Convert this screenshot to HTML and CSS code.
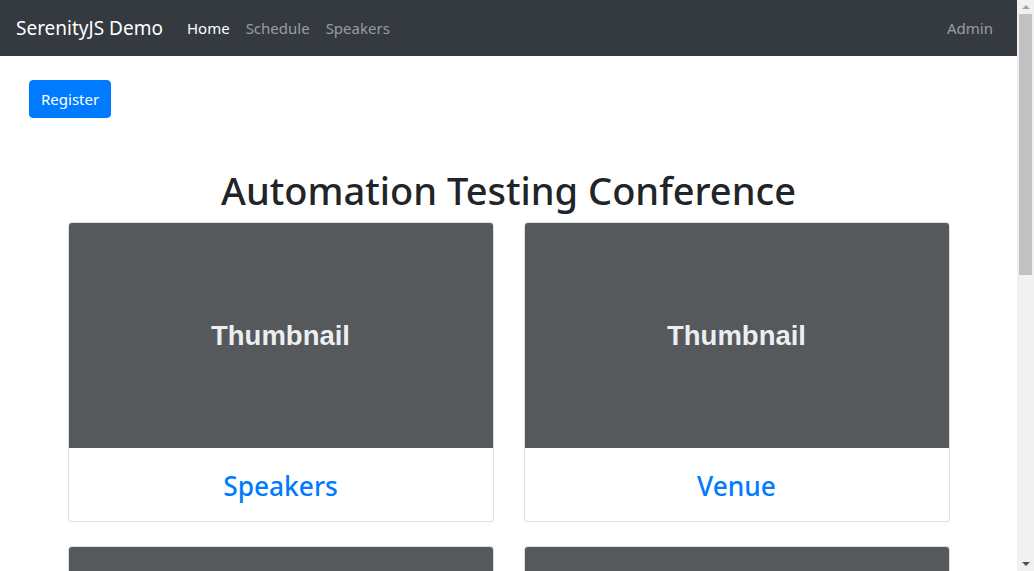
FILE: index.html
```html
<!DOCTYPE html>
<html lang="en">
<head>
<meta charset="utf-8">
<title>SerenityJS Demo</title>
<link rel="stylesheet" href="styles.css">
</head>
<body>
<div class="page">
  <nav class="navbar">
    <a class="brand" href="#">SerenityJS Demo</a>
    <ul class="nav">
      <li><a class="nav-link active" href="#">Home</a></li>
      <li><a class="nav-link" href="#">Schedule</a></li>
      <li><a class="nav-link" href="#">Speakers</a></li>
    </ul>
    <ul class="nav nav-right">
      <li><a class="nav-link" href="#">Admin</a></li>
    </ul>
  </nav>
  <main class="content">
    <div class="actions">
      <button class="btn" type="button">Register</button>
    </div>
    <h1 class="title">Automation Testing Conference</h1>
    <div class="cards">
      <div class="card">
        <div class="thumb"><span>Thumbnail</span></div>
        <div class="card-body"><a class="card-title" href="#">Speakers</a></div>
      </div>
      <div class="card">
        <div class="thumb"><span>Thumbnail</span></div>
        <div class="card-body"><a class="card-title" href="#">Venue</a></div>
      </div>
      <div class="card">
        <div class="thumb"></div>
      </div>
      <div class="card">
        <div class="thumb"></div>
      </div>
    </div>
  </main>
</div>
<div class="scrollbar">
  <div class="sb-arrow sb-up"></div>
  <div class="sb-track"><div class="sb-thumb"></div></div>
  <div class="sb-arrow sb-down"></div>
</div>
</body>
</html>
```
FILE: styles.css
```css
html, body {
  margin: 0;
  padding: 0;
  height: 100%;
  overflow: hidden;
}
body {
  display: flex;
  font-family: "Noto Sans", "Open Sans", sans-serif;
  font-size: 15px;
  line-height: 24px;
  color: #212529;
  background: #fff;
}
.page {
  flex: 1;
  min-width: 0;
  height: 100%;
  overflow: hidden;
}
.navbar {
  height: 56px;
  background: #343a40;
  display: flex;
  align-items: center;
  padding: 0 16px;
  box-sizing: border-box;
}
.brand {
  color: #fff;
  font-size: 19px;
  line-height: 30px;
  text-decoration: none;
  margin-right: 16px;
}
.nav {
  list-style: none;
  margin: 0;
  padding: 0;
  display: flex;
}
.nav-right {
  margin-left: auto;
}
.nav-link {
  display: block;
  padding: 8px;
  color: rgba(255,255,255,.5);
  text-decoration: none;
}
.nav-link.active {
  color: #fff;
}
.content {
  padding: 24px 0 0;
}
.actions {
  padding: 0 29px;
}
.btn {
  font-family: inherit;
  font-size: 15px;
  color: #fff;
  background: #007bff;
  border: 1px solid #007bff;
  border-radius: 4px;
  height: 38px;
  padding: 0 11px;
  cursor: pointer;
}
.title {
  margin: 48px 0 8px;
  text-align: center;
  font-size: 38px;
  font-weight: 500;
  line-height: 48px;
}
.cards {
  width: 882px;
  margin: 0 auto;
  display: grid;
  grid-template-columns: 1fr 1fr;
  column-gap: 30px;
  row-gap: 24px;
}
.card {
  border: 1px solid rgba(0,0,0,.125);
  border-radius: 4px;
  overflow: hidden;
  background: #fff;
}
.thumb {
  height: 225px;
  background: #55595c;
  display: flex;
  align-items: center;
  justify-content: center;
}
.thumb span {
  font-family: "Liberation Sans", Arial, sans-serif;
  font-weight: bold;
  font-size: 27.5px;
  line-height: 1;
  color: #eceeef;
}
.card-body {
  padding: 22px 20px 17px;
  text-align: center;
}
.card-title {
  display: block;
  font-size: 26.3px;
  font-weight: 500;
  line-height: 33.6px;
  color: #007bff;
  text-decoration: none;
}
.scrollbar {
  width: 17px;
  flex: none;
  height: 100%;
  background: #f1f1f1;
  display: flex;
  flex-direction: column;
  align-items: center;
}
.sb-arrow {
  width: 0;
  height: 0;
  border-left: 4px solid transparent;
  border-right: 4px solid transparent;
  margin: 5px 0;
}
.sb-up {
  border-bottom: 4px solid #a3a3a3;
}
.sb-down {
  border-top: 4px solid #505050;
}
.sb-track {
  flex: 1;
  width: 100%;
  display: flex;
  justify-content: center;
}
.sb-thumb {
  width: 13px;
  height: 261px;
  background: #c1c1c1;
}
```
